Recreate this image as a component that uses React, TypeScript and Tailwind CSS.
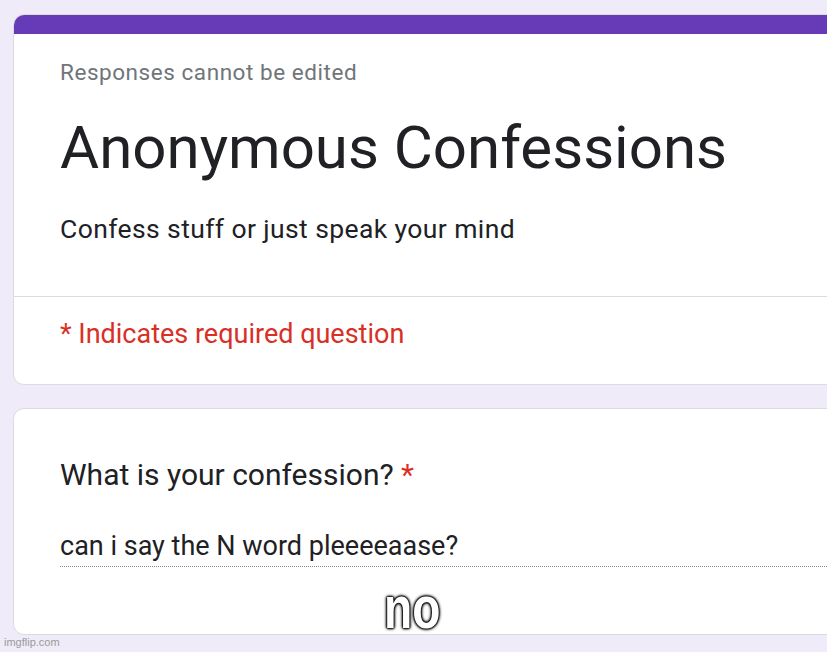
export default function App() {
  return (
    <div className="relative h-[652px] w-[827px] overflow-hidden bg-[#f0ebf8] font-['Roboto',sans-serif]">
      <div className="flex w-[860px] flex-col gap-[23px] pl-[13px] pt-[14px]">
        {/* header card */}
        <section className="overflow-hidden rounded-[11px] border border-[#dadce0] bg-white">
          <div className="h-[19px] bg-[#673ab7]" />
          <div className="px-[46px] pb-[51px] pt-[24px]">
            <p className="text-[22.5px] leading-[28px] tracking-[0.55px] text-[#70757a]">Responses cannot be edited</p>
            <h1 className="mt-[27px] text-[60px] leading-[70px] text-[#202124]">Anonymous Confessions</h1>
            <p className="mt-[30px] text-[26.5px] leading-[32px] tracking-[0.4px] text-[#202124]">
              Confess stuff or just speak your mind
            </p>
          </div>
          <div className="border-t border-[#dadce0] px-[46px] pb-[34px] pt-[21px]">
            <p className="text-[27px] leading-[32px] text-[#d93025]">* Indicates required question</p>
          </div>
        </section>

        {/* question card */}
        <section className="rounded-[11px] border border-[#dadce0] bg-white pb-[67px] pl-[46px] pt-[48px]">
          <p className="text-[30px] leading-[36px] text-[#202124]">
            What is your confession? <span className="text-[#d93025]">*</span>
          </p>
          <div className="mt-[37px] border-b border-dotted border-[#80868b] pb-[4px]">
            <p className="text-[27px] leading-[32px] text-[#202124]">can i say the N word pleeeeaase?</p>
          </div>
        </section>
      </div>

      <span className="absolute left-[384px] top-[578px] origin-left scale-x-[0.77] font-['Liberation_Sans',sans-serif] text-[60px] font-bold leading-[60px] text-white [text-shadow:0_0_4px_#000,0_0_4px_#000,0_0_3px_#000,0_0_2px_#000,0_0_2px_#000,0_0_1px_#000]">
        no
      </span>
      <span className="absolute bottom-[2px] left-[4px] font-['Liberation_Sans',sans-serif] text-[11px] text-[#9a9a9a]">
        imgflip.com
      </span>
    </div>
  );
}
